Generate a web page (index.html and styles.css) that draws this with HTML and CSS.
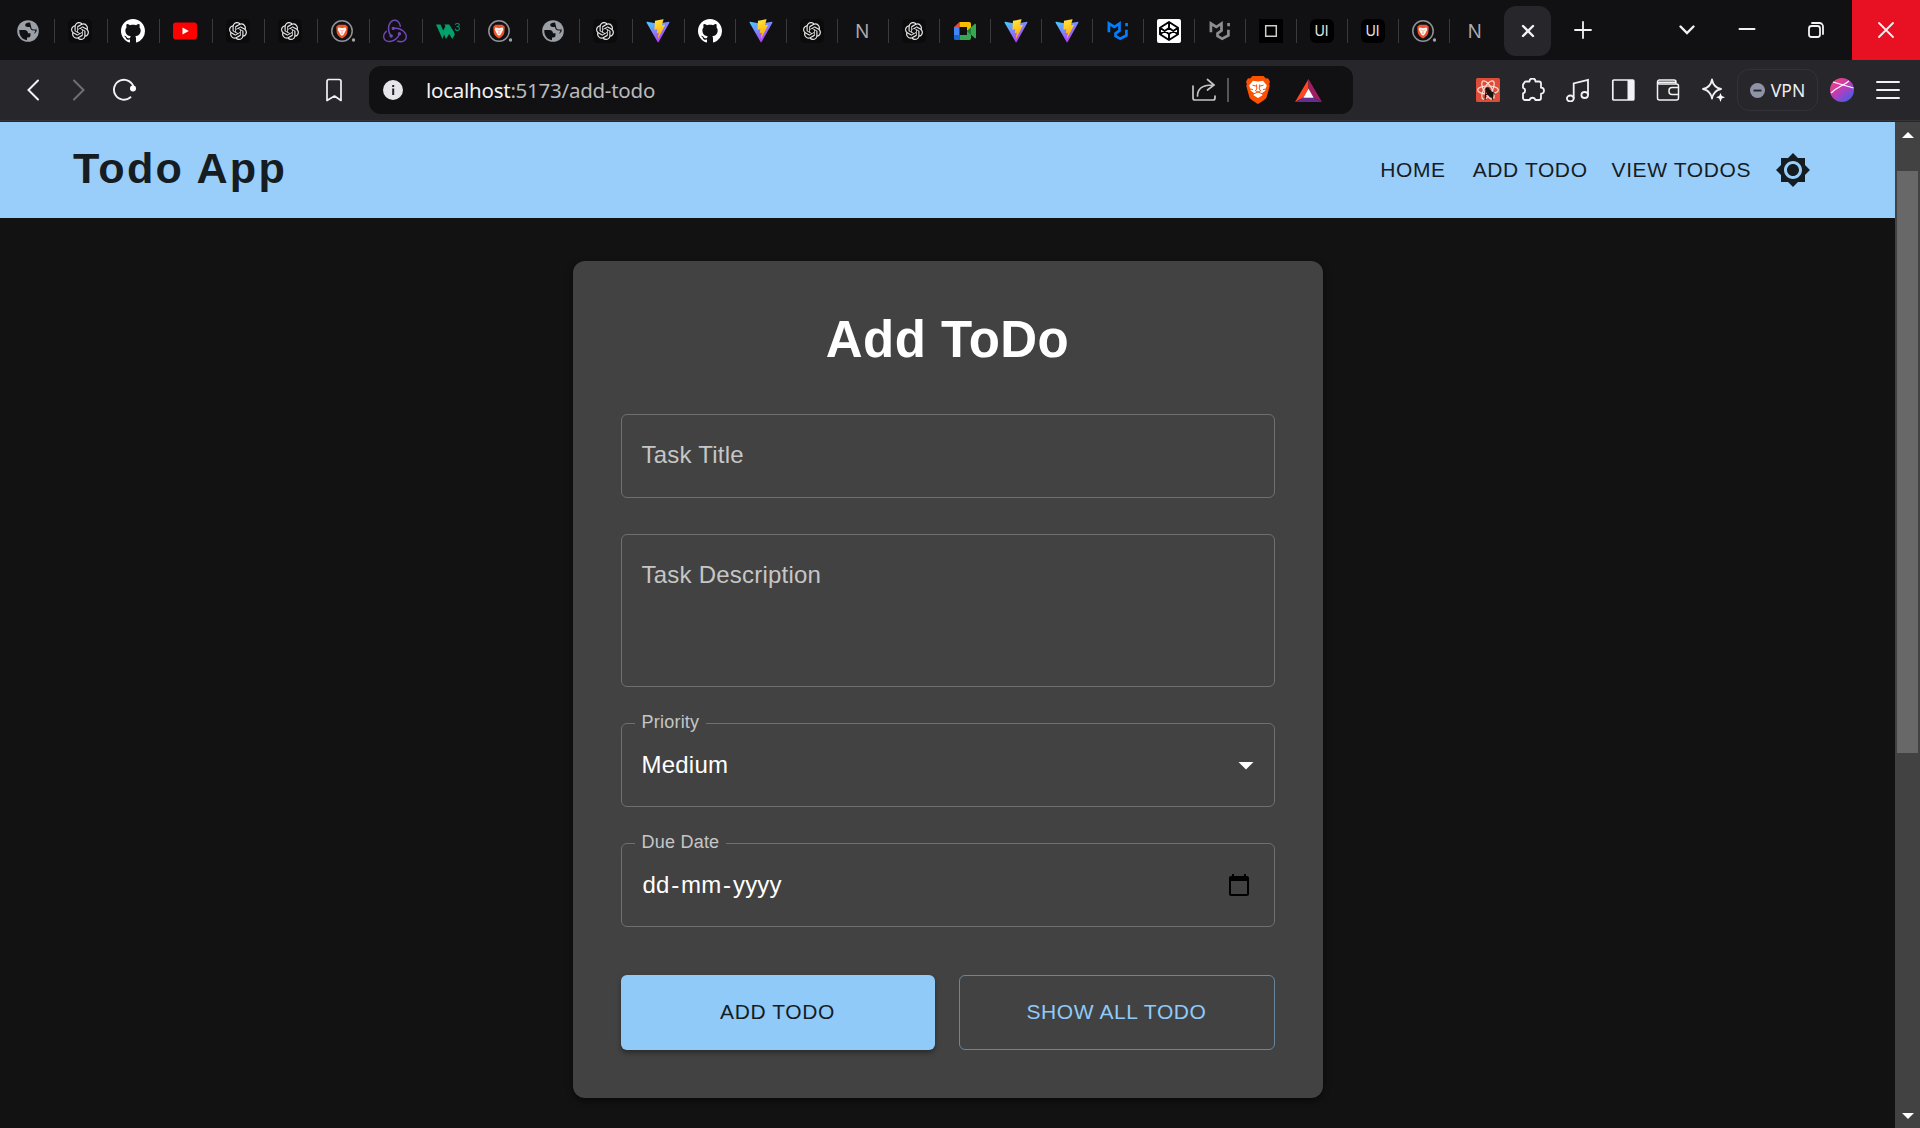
FILE: index.html
```html
<!DOCTYPE html>
<html lang="en">
<head>
<meta charset="utf-8">
<title>Todo App</title>
<link rel="stylesheet" href="styles.css">
</head>
<body>
<svg class="sprite" aria-hidden="true">
  <defs>
    <linearGradient id="vite-a" x1="0" y1="0" x2=".6" y2="1"><stop stop-color="#41d1ff"/><stop offset="1" stop-color="#bd34fe"/></linearGradient>
    <linearGradient id="vite-b" x1=".4" y1="0" x2=".6" y2="1"><stop stop-color="#ffea5c"/><stop offset=".1" stop-color="#ffdd35"/><stop offset="1" stop-color="#ffa800"/></linearGradient>
    <linearGradient id="orb" x1=".1" y1=".1" x2=".8" y2=".95"><stop stop-color="#f0437c"/><stop offset=".45" stop-color="#c23bb4"/><stop offset="1" stop-color="#4a5bea"/></linearGradient>
  </defs>
  <symbol id="globe" viewBox="0 0 24 24"><circle cx="12" cy="12" r="10.800" fill="#9aa0a6"/><path d="M3.300 11h5.200c2.200 0 3.500 1.300 3.500 3.300h2.500v2.200c0 1.200-1 2-2.200 2H11v2.700C6.700 20.700 3.300 17 3.300 12z" fill="#111113"/><path d="M13.500 3.400c-2.500.2-4.300 1-4.300 2.600 0 1.300 1 2 2.600 2H14c.3 2.300 1.300 3.500 3.500 3.500h1.800c0 1.400-.8 2.300-1.500 3.300 1.500-.5 2.700-1.700 2.900-3.300C20.500 7.500 17.500 4.300 13.500 3.400z" fill="#111113"/><path d="M14 3.200h2.500l4 3.800v3.500h-3c-1.500 0-2.300-1-2.300-2.500z" fill="#9aa0a6"/></symbol>
  <symbol id="gpt" viewBox="0 0 24 24"><rect width="24" height="24" rx="5" fill="#0b0b0c"/><path transform="translate(3 3) scale(.75)" fill="#e6e6e6" d="M22.2819 9.8211a5.9847 5.9847 0 0 0-.5157-4.9108 6.0462 6.0462 0 0 0-6.5098-2.9A6.0651 6.0651 0 0 0 4.9807 4.1818a5.9847 5.9847 0 0 0-3.9977 2.9 6.0462 6.0462 0 0 0 .7427 7.0966 5.98 5.98 0 0 0 .511 4.9107 6.051 6.051 0 0 0 6.5146 2.9001A5.9847 5.9847 0 0 0 13.2599 24a6.0557 6.0557 0 0 0 5.7718-4.2058 5.9894 5.9894 0 0 0 3.9977-2.9001 6.0557 6.0557 0 0 0-.7475-7.0729zm-9.022 12.6081a4.4755 4.4755 0 0 1-2.8764-1.0408l.1419-.0804 4.7783-2.7582a.7948.7948 0 0 0 .3927-.6813v-6.7369l2.02 1.1686a.071.071 0 0 1 .038.052v5.5826a4.504 4.504 0 0 1-4.4945 4.4944zm-9.6607-4.1254a4.4708 4.4708 0 0 1-.5346-3.0137l.142.0852 4.783 2.7582a.7712.7712 0 0 0 .7806 0l5.8428-3.3685v2.3324a.0804.0804 0 0 1-.0332.0615L9.74 19.9502a4.4992 4.4992 0 0 1-6.1408-1.6464zM2.3408 7.8956a4.485 4.485 0 0 1 2.3655-1.9728V11.6a.7664.7664 0 0 0 .3879.6765l5.8144 3.3543-2.0201 1.1685a.0757.0757 0 0 1-.071 0l-4.8303-2.7865A4.504 4.504 0 0 1 2.3408 7.872zm16.5963 3.8558L13.1038 8.364 15.1192 7.2a.0757.0757 0 0 1 .071 0l4.8303 2.7913a4.4944 4.4944 0 0 1-.6765 8.1042v-5.6772a.79.79 0 0 0-.407-.667zm2.0107-3.0231l-.142-.0852-4.7735-2.7818a.7759.7759 0 0 0-.7854 0L9.409 9.2297V6.8974a.0662.0662 0 0 1 .0284-.0615l4.8303-2.7866a4.4992 4.4992 0 0 1 6.6802 4.66zM8.3065 12.863l-2.02-1.1638a.0804.0804 0 0 1-.038-.0567V6.0742a4.4992 4.4992 0 0 1 7.3757-3.4537l-.142.0805L8.704 5.459a.7948.7948 0 0 0-.3927.6813zm1.0976-2.3654l2.602-1.4998 2.6069 1.4998v2.9994l-2.5974 1.4997-2.6067-1.4997Z"/></symbol>
  <symbol id="github" viewBox="0 0 16 16"><path fill="#fff" d="M8 0C3.580 0 0 3.580 0 8c0 3.540 2.290 6.530 5.470 7.590.4.070.550-.170.550-.380 0-.190-.010-.820-.010-1.490-2.010.370-2.530-.490-2.690-.940-.090-.230-.480-.940-.820-1.130-.280-.150-.680-.520-.010-.530.630-.010 1.080.580 1.230.820.720 1.210 1.870.870 2.330.660.070-.520.280-.870.510-1.070-1.780-.2-3.640-.890-3.640-3.950 0-.870.310-1.590.820-2.150-.080-.2-.360-1.020.080-2.120 0 0 .670-.210 2.200.820.640-.180 1.320-.270 2-.270s1.360.090 2 .270c1.530-1.040 2.200-.820 2.200-.820.440 1.100.160 1.920.080 2.120.510.560.820 1.270.820 2.150 0 3.070-1.870 3.750-3.650 3.950.290.250.540.730.540 1.480 0 1.070-.010 1.930-.010 2.200 0 .210.150.460.550.380A8.010 8.010 0 0 0 16 8c0-4.420-3.580-8-8-8"/></symbol>
  <symbol id="youtube" viewBox="0 0 24 24"><rect y="3.500" width="24" height="17" rx="3" fill="#f00"/><path d="M9.500 8.400v7.200l6.300-3.600z" fill="#fff"/></symbol>
  <symbol id="brave-tab" viewBox="0 0 24 24"><circle cx="11" cy="12" r="10.200" fill="none" stroke="#8f9398" stroke-width="1.500"/><path d="M7.500 5.800h7l2.300 2-.5 5.700c-.3 2.300-2.400 4.500-5.300 6-2.900-1.500-5-3.700-5.300-6l-.5-5.700z" fill="#f1562b"/><path d="M7.500 8.500l3.500.7 3.500-.7.800 2-1.300 2.500-1.300 2.500-1.700 1.300-1.700-1.300L8 13l-1.300-2.500z" fill="#fff"/><path d="M8.500 10.800l2 .7m3-.7l-2 .7M11 11.500v2.500l-1.200.7m1.200-.7l1.200.7" stroke="#f1562b" stroke-width=".5" fill="none"/><circle cx="22.500" cy="21" r="1.700" fill="#9fa1a5"/></symbol>
  <symbol id="redux" viewBox="0 0 24 24"><path fill="#7148b5" d="M16.634 16.504c.87-.075 1.543-.84 1.5-1.754-.047-.914-.796-1.648-1.709-1.648h-.061a1.710 1.710 0 0 0-1.648 1.769c.03.479.226.869.494 1.153-1.048 2.038-2.621 3.535-5.005 4.795-1.603.838-3.296 1.154-4.944.929-1.378-.194-2.456-.81-3.116-1.799-.988-1.499-1.078-3.116-.255-4.734.601-1.166 1.499-2.023 2.099-2.443a9.960 9.960 0 0 1-.42-1.543C-.868 14.408-.416 18.752.932 20.805c1.004 1.498 3.057 2.456 5.304 2.456.599 0 1.230-.044 1.843-.194 3.897-.749 6.848-3.086 8.541-6.532zM21.968 12.774c-2.321-2.727-5.738-4.225-9.634-4.225h-.51c-.253-.554-.837-.899-1.498-.899h-.045c-.943 0-1.678.81-1.647 1.753.03.898.794 1.648 1.708 1.648h.074c.675-.03 1.259-.45 1.498-1.049h.555c2.309 0 4.495.674 6.488 1.992 1.527 1.005 2.622 2.323 3.237 3.896.538 1.288.509 2.547-.045 3.597-.855 1.647-2.294 2.517-4.196 2.517-1.199 0-2.367-.375-2.967-.644-.36.298-.96.793-1.394 1.093 1.318.598 2.652.943 3.940.943 2.922 0 5.093-1.647 5.918-3.236.898-1.798.824-4.824-1.470-7.416zM6.490 17.042c.03.899.793 1.648 1.708 1.648h.06a1.688 1.688 0 0 0 1.648-1.768c0-.9-.779-1.647-1.693-1.647h-.06c-.06 0-.149 0-.226.029-1.243-2.098-1.768-4.347-1.572-6.772.12-1.828.72-3.417 1.797-4.735.899-1.124 2.593-1.680 3.746-1.708 3.236-.061 4.585 3.971 4.689 5.574l1.498.45c-.345-4.914-3.400-7.492-6.322-7.492-2.742 0-5.273 1.993-6.293 4.915-1.393 3.896-.479 7.641 1.229 10.638-.149.195-.239.539-.209.868z"/></symbol>
  <symbol id="vite" viewBox="0 0 410 404"><path fill="url(#vite-a)" d="M399.641 59.525L215.643 388.545C211.844 395.338 202.084 395.378 198.228 388.618L10.582 59.556C6.381 52.190 12.680 43.267 21.028 44.759L205.223 77.682C206.398 77.892 207.601 77.890 208.776 77.676L389.119 44.806C397.439 43.289 403.768 52.143 399.641 59.525Z"/><path fill="url(#vite-b)" d="M292.965 1.574L156.801 28.255C154.563 28.694 152.906 30.590 152.771 32.866L144.395 174.330C144.198 177.662 147.258 180.248 150.510 179.498L188.420 170.749C191.967 169.931 195.172 173.055 194.443 176.622L183.180 231.775C182.422 235.487 185.907 238.661 189.532 237.560L212.947 230.446C216.577 229.344 220.065 232.527 219.297 236.242L201.398 322.875C200.278 328.294 207.486 331.249 210.492 326.603L212.500 323.500L323.454 102.072C325.312 98.365 322.108 94.137 318.036 94.923L279.014 102.454C275.347 103.161 272.227 99.746 273.262 96.158L298.731 7.867C299.767 4.273 296.636 .855 292.965 1.574Z"/></symbol>
  <symbol id="meet" viewBox="0 0 24 24"><path d="M1 8l5.500-5V8z" fill="#ea4335"/><path d="M1 8h5.500v8H1z" fill="#4285f4"/><path d="M1 16h5.500v5H2.500A1.500 1.500 0 0 1 1 19.500z" fill="#1967d2"/><path d="M6.500 3h9.700A1.800 1.800 0 0 1 18 4.800V9l-4 3.200V8H6.500z" fill="#fbbc04"/><path d="M6.500 16H14v-4l4 3.400v3.800a1.800 1.800 0 0 1-1.800 1.800H6.500z" fill="#34a853"/><path d="M14 12l7.600-7c.7-.6 1.400-.2 1.400.6v12.800c0 .8-.7 1.200-1.400.6z" fill="#34a853"/><path d="M14 12l4-3.600v7.200z" fill="#188038"/></symbol>
  <symbol id="mui" viewBox="0 0 24 24"><path d="M2.900 14V5.300L8.300 8.800l5.200-3.500v7l-4 2.900v2.600l4.700 2.800 6.200-3.400v-5.600M20.600 4.700v3.300" transform="translate(0 -.8)" fill="none" stroke="currentColor" stroke-width="2.700"/></symbol>
  <symbol id="codepen" viewBox="0 0 24 24"><rect width="24" height="24" rx="2" fill="#fff"/><path d="M12 3l9 5.800v6.400L12 21l-9-5.800V8.800zM12 3v5.800m0 6.200v6M3 8.800l9 6.200 9-6.200M3 15.200L12 9l9 6.200" fill="none" stroke="#000" stroke-width="1.900" stroke-linejoin="round"/></symbol>
  <symbol id="frame" viewBox="0 0 24 24"><path fill="#000" d="M0 0h24v24H0z"/><path d="M6.700 6.700h10.600v10.600H6.700z" fill="none" stroke="#d0cec9" stroke-width="1.500"/></symbol>
</svg>

<header class="tabstrip">
  <div class="tabs">
    <div class="tab wide"><svg class="fav"><use href="#globe"/></svg></div>
    <div class="tab wide"><svg class="fav"><use href="#gpt"/></svg></div>
    <div class="tab wide"><svg class="fav"><use href="#github"/></svg></div>
    <div class="tab wide"><svg class="fav"><use href="#youtube"/></svg></div>
    <div class="tab wide"><svg class="fav"><use href="#gpt"/></svg></div>
    <div class="tab wide"><svg class="fav"><use href="#gpt"/></svg></div>
    <div class="tab wide"><svg class="fav"><use href="#brave-tab"/></svg></div>
    <div class="tab wide"><svg class="fav"><use href="#redux"/></svg></div>
    <div class="tab wide"><svg class="fav" viewBox="0 0 24 24"><path d="M0 5.500h4.500l2.700 6 2.200-4-.9-2h4.700l4.800 7.500.8 2.800-2.600 4.200-3-5-3.200 5L8 15.500 6.500 20z" fill="#04a06a"/><text x="18.500" y="11.500" class="w3-sup">3</text></svg></div>
    <div class="tab wide"><svg class="fav"><use href="#brave-tab"/></svg></div>
    <div class="tab wide"><svg class="fav"><use href="#globe"/></svg></div>
    <div class="tab wide"><svg class="fav"><use href="#gpt"/></svg></div>
    <div class="tab wide"><svg class="fav"><use href="#vite"/></svg></div>
    <div class="tab"><svg class="fav"><use href="#github"/></svg></div>
    <div class="tab"><svg class="fav"><use href="#vite"/></svg></div>
    <div class="tab"><svg class="fav"><use href="#gpt"/></svg></div>
    <div class="tab"><span class="letter">N</span></div>
    <div class="tab"><svg class="fav"><use href="#gpt"/></svg></div>
    <div class="tab"><svg class="fav"><use href="#meet"/></svg></div>
    <div class="tab"><svg class="fav"><use href="#vite"/></svg></div>
    <div class="tab"><svg class="fav"><use href="#vite"/></svg></div>
    <div class="tab"><svg class="fav mui-blue"><use href="#mui"/></svg></div>
    <div class="tab"><svg class="fav"><use href="#codepen"/></svg></div>
    <div class="tab"><svg class="fav mui-gray"><use href="#mui"/></svg></div>
    <div class="tab"><svg class="fav"><use href="#frame"/></svg></div>
    <div class="tab"><span class="ui-badge">UI</span></div>
    <div class="tab"><span class="ui-badge">UI</span></div>
    <div class="tab"><svg class="fav"><use href="#brave-tab"/></svg></div>
    <div class="tab last"><span class="letter">N</span></div>
    <div class="tab active"><svg class="stroke" width="14" height="14" viewBox="0 0 14 14"><path d="M2 2l10 10M12 2L2 12" stroke-width="2.400"/></svg></div>
    <svg class="new-tab stroke" width="18" height="18" viewBox="0 0 18 18"><path d="M9 1v16M1 9h16" stroke-width="1.800"/></svg>
  </div>
  <div class="window-controls">
    <div class="control chevron"><svg class="stroke" width="18" height="18" viewBox="0 0 18 18"><path d="M2.500 5.500L9 12l6.500-6.500" stroke-width="2.400"/></svg></div>
    <div class="control minimize"><svg class="stroke" width="18" height="18" viewBox="0 0 18 18"><path d="M1.500 8h15" stroke-width="2"/></svg></div>
    <div class="control restore"><svg class="stroke" width="18" height="18" viewBox="0 0 18 18"><rect x="2" y="5" width="11" height="11" rx="2.500" stroke-width="1.800"/><path d="M5 2h7.500A3.500 3.500 0 0 1 16 5.500V13" stroke-width="1.800"/></svg></div>
    <div class="control close"><svg class="stroke" width="18" height="18" viewBox="0 0 18 18"><path d="M2 2l14 14M16 2L2 16" stroke-width="1.800"/></svg></div>
  </div>
</header>

<nav class="toolbar">
  <div class="nav-buttons">
    <svg class="ico stroke" viewBox="0 0 24 24"><path d="M17 2.500L7.500 12l9.500 9.500" stroke-width="2"/></svg>
    <svg class="ico stroke dim" viewBox="0 0 24 24"><path d="M7 2.500l9.500 9.500L7 21.500" stroke-width="2"/></svg>
    <svg class="ico stroke reload" viewBox="0 0 24 24"><path d="M18.500 19.300A10 10 0 1 1 21.800 10" stroke-width="1.900"/><circle cx="21" cy="10.500" r="3" fill="#fff" stroke="none"/></svg>
  </div>
  <svg class="ico stroke" viewBox="0 0 24 24"><path d="M5.500 1.500h11a2 2 0 0 1 2 2V22.500L12 18l-7.500 4.500V3.500a2 2 0 0 1 2-2z" transform="translate(.5 0)" stroke-width="1.700" stroke-linejoin="round"/></svg>
  <div class="urlbar">
    <svg class="info" width="20" height="20" viewBox="0 0 20 20"><circle cx="10" cy="10" r="10" fill="#e6e5ea"/><path d="M9.200 8.500h2V15h-2zM9.200 5h2v2h-2z" fill="#222"/></svg>
    <span class="url">localhost<span class="path">:5173/add-todo</span></span>
    <svg class="ico stroke share" viewBox="0 0 24 24"><path d="M1 8v12a2 2 0 0 0 2 2h18a2 2 0 0 0 2-2v-2M5.500 18C5.500 11 10 7 20 7M15.500 1.500L22 7l-6.500 5" stroke-width="1.700"/></svg>
    <span class="url-divider"></span>
    <svg width="24" height="28" viewBox="0 0 24 28"><path d="M6.500 0h11l2.500 2.500 2-.3 2 3.500-.8 2.300.5 2-3 11c-.5 2-5 4.800-8.700 7-3.700-2.200-8.200-5-8.700-7L.300 10l.5-2L0 5.700l2-3.500 2 .3z" fill="#fb5101"/><path d="M7 4.800l5 .7 5-.7 3.800 4.500-1.600 5.500-3.400 2.500.7 2L12 22l-4.500-2.700.7-2-3.400-2.500-1.600-5.500z" fill="#fff"/><path d="M6.500 9.200l3.700.9M17.500 9.200l-3.700.9M10.500 8.500l.3 4.500-1.500 1.700L12 16l2.700-1.300-1.500-1.700.3-4.500M8 17.700l4-1.700 4 1.700M4 13l3 .5M20 13l-3 .5" fill="none" stroke="#fb5101" stroke-width="1"/></svg>
    <svg class="bat" width="27" height="23" viewBox="0 0 27 23"><path d="M13.500 0v9.500L8.500 18.500 0 23z" fill="#ff4724"/><path d="M13.500 0v9.500l5 9L27 23z" fill="#9e1f63"/><path d="M0 23l8.500-4.500h10L27 23z" fill="#662d91"/><path d="M13.500 9.500l5.200 9.200H8.300z" fill="#fff"/></svg>
  </div>
  <div class="extensions">
    <svg class="ico" viewBox="0 0 24 24"><rect width="24" height="24" rx="1.500" fill="#de4b37"/><g fill="none" stroke="#f7ded8" stroke-width="1.200"><ellipse cx="12" cy="12" rx="10.300" ry="4"/><ellipse cx="12" cy="12" rx="10.300" ry="4" transform="rotate(60 12 12)"/><ellipse cx="12" cy="12" rx="10.300" ry="4" transform="rotate(120 12 12)"/></g><ellipse cx="14" cy="15.500" rx="2.600" ry="4.300" transform="rotate(-35 14 15.500)" fill="#1c1211"/><circle cx="11.500" cy="11.500" r="2.200" fill="#1c1211"/><path d="M9 17l9-3m-8-1l-1 9m5-7l5 1m-3 2l1 4" stroke="#1c1211" stroke-width="1.200"/></svg>
    <svg class="ico stroke" viewBox="0 0 24 24"><path d="M3 5.500a2 2 0 0 1 2-2h3.500a3 3 0 0 1 6 0H18a2 2 0 0 1 2 2v4.200a3 3 0 0 1 0 6V20a2 2 0 0 1-2 2h-3.600a3 3 0 0 0-5.800 0H4a2 2 0 0 1-2-2v-4.600a2.900 2.900 0 0 0 0-5.600V6.500a2 2 0 0 1 1-1" stroke-width="1.800" stroke-linejoin="round"/></svg>
    <svg class="ico stroke" viewBox="0 0 24 24"><path d="M7.700 20V5.500L22 2v14.500" stroke-width="1.800"/><ellipse cx="4.300" cy="20.500" rx="3.400" ry="3" stroke-width="1.800"/><ellipse cx="18.700" cy="17" rx="3.300" ry="3" stroke-width="1.800"/></svg>
    <svg class="ico stroke" viewBox="0 0 24 24"><rect x="1.800" y="2" width="21" height="20" rx="1" stroke-width="1.700"/><path d="M16.500 2h6v20h-6z" fill="#f2f2f4" stroke="none"/></svg>
    <svg class="ico stroke" viewBox="0 0 24 24"><path d="M22.500 9V8a2 2 0 0 0-2-2H3.500a2 2 0 0 1-2-2v0a2 2 0 0 1 2-2H18a2 2 0 0 1 2 2v2M1.500 4v16a2 2 0 0 0 2 2h17a2 2 0 0 0 2-2v-1M22.500 9.500H16a3 3 0 0 0-3 3v1a3 3 0 0 0 3 3h6.500zM22.500 9v11M3 4.200h16" stroke-width="1.500"/></svg>
    <svg class="ico stroke" viewBox="0 0 24 24"><path d="M11 1.500c1 5.500 3.500 8.300 9 9.500-5.500 1.200-8 4-9 9.500-1-5.500-3.500-8.300-9-9.500 5.500-1.200 8-4 9-9.500z" stroke-width="1.800" stroke-linejoin="round"/><path d="M19.500 15l1.300 3 3.200 1.300-3.200 1.300L19.500 24l-1.300-3.400-3.200-1.300 3.200-1.300z" fill="#fff" stroke="none"/></svg>
  </div>
  <div class="vpn"><svg width="15" height="15" viewBox="0 0 15 15"><circle cx="7.500" cy="7.500" r="7.500" fill="#8f93a8"/><path d="M3.500 6.600h8v1.900h-8z" fill="#27262b"/></svg><span>VPN</span></div>
  <svg class="ico avatar" viewBox="0 0 24 24"><circle cx="12" cy="12" r="12" fill="url(#orb)"/><path d="M3 4l20.500 6M1 15C7 9 13 8 19 3" fill="none" stroke="#fff" stroke-width="1.200"/></svg>
  <svg class="ico stroke menu" viewBox="0 0 24 24"><path d="M1 4h22M1 12h22M1 20h22" stroke-width="1.900"/></svg>
</nav>

<div class="viewport">
  <div class="page">
    <header class="appbar">
      <div class="brand">Todo App</div>
      <nav class="links">
        <a>HOME</a>
        <a>ADD TODO</a>
        <a class="view">VIEW TODOS</a>
      </nav>
      <svg class="theme" width="36" height="36" viewBox="0 0 24 24"><path fill="#161d22" d="M20 8.690V4h-4.690L12 .690 8.690 4H4v4.690L.690 12 4 15.310V20h4.690L12 23.310 15.310 20H20v-4.690L23.310 12 20 8.690zM12 18c-3.310 0-6-2.690-6-6s2.690-6 6-6 6 2.690 6 6-2.690 6-6 6zm0-10c-2.210 0-4 1.790-4 4s1.790 4 4 4 4-1.790 4-4-1.790-4-4-4z"/></svg>
    </header>
    <main class="card">
      <h1>Add ToDo</h1>
      <div class="field"><span class="placeholder">Task Title</span></div>
      <div class="field area"><span class="placeholder">Task Description</span></div>
      <div class="field"><span class="label">Priority</span><span class="value">Medium</span><svg class="caret" width="36" height="36" viewBox="0 0 24 24"><path d="M7 10l5 5 5-5z" fill="#fff"/></svg></div>
      <div class="field"><span class="label">Due Date</span><span class="value date">dd<i>-</i>mm<i>-</i>yyyy</span><svg class="calendar" width="24" height="24" viewBox="0 0 24 24"><path d="M20 3h-1V1h-2v2H7V1H5v2H4c-1.100 0-2 .9-2 2v16c0 1.100.9 2 2 2h16c1.100 0 2-.9 2-2V5c0-1.100-.9-2-2-2zm0 18H4V8h16v13z"/></svg></div>
      <div class="actions">
        <button class="btn primary">ADD TODO</button>
        <button class="btn outlined">SHOW ALL TODO</button>
      </div>
    </main>
  </div>
  <aside class="scrollbar"><i class="arrow up"></i><i class="thumb"></i><i class="arrow down"></i></aside>
</div>
</body>
</html>
```

FILE: styles.css
```css
* { box-sizing: border-box; }
body {
  margin: 0;
  height: 1128px;
  overflow: hidden;
  display: flex;
  flex-direction: column;
  background: #121212;
  font-family: "Liberation Sans", Arial, sans-serif;
}
svg { display: block; flex: none; }
.sprite { width: 0; height: 0; position: absolute; }
.stroke { fill: none; stroke: #f2f2f4; stroke-linecap: round; }
.ico { width: 24px; height: 24px; }
.dim { stroke: #6f6f74; }

/* Tab strip */
.tabstrip {
  height: 60px;
  flex: none;
  display: flex;
  justify-content: space-between;
  background: #111113;
}
.tabs { display: flex; align-items: center; padding: 2px 0 0 2.500px; }
.tab {
  width: 51px;
  height: 24px;
  padding-right: 1px;
  display: flex;
  align-items: center;
  justify-content: center;
  border-right: 1.5px solid #3a3a3d;
}
.tab.wide { width: 52.5px; }
.fav { width: 24px; height: 24px; }
.mui-blue { color: #007fff; }
.mui-gray { color: #8e8e90; }
.w3-sup { font: 10.500px "Liberation Sans", sans-serif; fill: #04a06a; }
.letter { width: 15px; font: 19px "Noto Sans", sans-serif; line-height: 24px; color: #acacae; }
.ui-badge {
  width: 24px;
  height: 24px;
  border-radius: 6px;
  background: #000;
  color: #e4e4e4;
  font: 14px/24px Inter, sans-serif;
  text-align: center;
}
.tab.last { border-right: 0; }
.tab.active {
  width: 47px;
  height: 50px;
  margin-left: 3px;
  padding: 0;
  border: 0;
  border-radius: 12px;
  background: #27262b;
}
.new-tab { margin: -3px 0 0 23px; }
.window-controls { display: flex; }
.control { display: flex; align-items: center; justify-content: center; }
.chevron { width: 59px; }
.minimize { width: 62px; }
.restore { width: 74px; padding-left: 2px; }
.close { width: 68px; padding-right: 1px; background: #e81123; }

/* Toolbar */
.toolbar {
  height: 62px;
  flex: none;
  display: flex;
  align-items: center;
  padding: 0 20px 2px 21px;
  background: linear-gradient(#27262b 60px, #343338 60px, #343338 61px, #27262b 61px);
}
.nav-buttons { width: 301px; display: flex; gap: 22px; }
.reload { margin-left: -1px; }
.urlbar {
  width: 984px;
  height: 48px;
  margin: 0 123px 0 23px;
  padding: 0 31px 0 14px;
  display: flex;
  align-items: center;
  border-radius: 12px;
  background: #111113;
}
.url { flex: 1; padding-left: 23px; font: 20.500px "Noto Sans", sans-serif; letter-spacing: -.25px; color: #f2f2f4; }
.path { color: #b9b9bc; }
.share { stroke: #c4c4c6; }
.url-divider { width: 2px; height: 24px; margin: 0 17px 0 11px; background: #56565a; }
.bat { margin-left: 25px; }
.extensions { display: flex; gap: 21px; }
.vpn {
  width: 81px;
  height: 42px;
  margin: 0 12px;
  display: flex;
  align-items: center;
  justify-content: center;
  gap: 6px;
  border: 1.5px solid #323238;
  border-radius: 12px;
  color: #eeeef0;
  font: 17.500px "Noto Sans", sans-serif;
}
.menu { margin-left: 22px; }

/* Page */
.viewport { flex: 1; display: flex; }
.page { flex: 1; display: flex; flex-direction: column; align-items: center; }
.appbar {
  align-self: stretch;
  height: 96px;
  padding: 0 84px 0 73px;
  display: flex;
  align-items: center;
  background: #9acefa;
  color: #161d22;
}
.brand { flex: 1; padding-bottom: 3px; font-size: 43.200px; font-weight: 700; letter-spacing: 2.160px; }
.links { display: flex; gap: 27px; font-size: 21px; letter-spacing: .6px; }
.view { margin-left: -3px; }
.theme { margin-left: 24px; }
.card {
  width: 750px;
  height: 837px;
  margin-top: 43px;
  padding: 49px 48px 48px;
  display: flex;
  flex-direction: column;
  border-radius: 12px;
  background: #424242;
  box-shadow: 0 3px 6px rgba(0, 0, 0, .5);
}
h1 {
  margin: 0 0 44px;
  height: 60px;
  text-align: center;
  color: #fff;
  font-size: 51px;
  line-height: 60px;
  letter-spacing: .45px;
}
.field {
  position: relative;
  flex: none;
  height: 84px;
  margin-bottom: 36px;
  padding: 0 20px;
  display: flex;
  align-items: center;
  justify-content: space-between;
  border: 1px solid #6f6f6f;
  border-radius: 6px;
  font-size: 24px;
  letter-spacing: .225px;
  line-height: 34px;
}
.area { height: 153px; align-items: flex-start; padding-top: 23px; }
.field:not(.area) .placeholder { margin-top: -2px; }
.placeholder { color: #c6c6c6; }
.value { color: #fff; }
.date { padding-left: 1px; }
.date i { margin: 0 1.600px; font-style: normal; }
.label {
  position: absolute;
  left: 13px;
  top: -14px;
  padding: 0 7px;
  background: #424242;
  color: #c6c6c6;
  font-size: 18px;
  line-height: 24px;
}
.caret { margin-right: -10px; }
.calendar { margin-right: 3px; }
.actions { display: grid; grid-template-columns: 314px 316px; gap: 24px; margin-top: 12px; }
.btn {
  height: 75px;
  padding: 0 0 2px;
  border: 0;
  border-radius: 6px;
  font: 21px "Liberation Sans", Arial, sans-serif;
  letter-spacing: .6px;
}
.primary { background: #90caf9; color: #161d22; box-shadow: 0 3px 5px rgba(0, 0, 0, .35); }
.outlined { background: transparent; color: #90caf9; border: 1px solid #69869e; }

/* Scrollbar */
.scrollbar {
  width: 25px;
  padding: 10px 2px 9px;
  display: flex;
  flex-direction: column;
  align-items: center;
  background: #424242;
}
.arrow { border: 6px solid transparent; }
.up { border-top: 0; border-bottom-color: #fff; }
.down { border-bottom: 0; border-top-color: #fff; margin-top: auto; }
.thumb { width: 21px; height: 582px; margin-top: 33px; background: #686868; }
```
